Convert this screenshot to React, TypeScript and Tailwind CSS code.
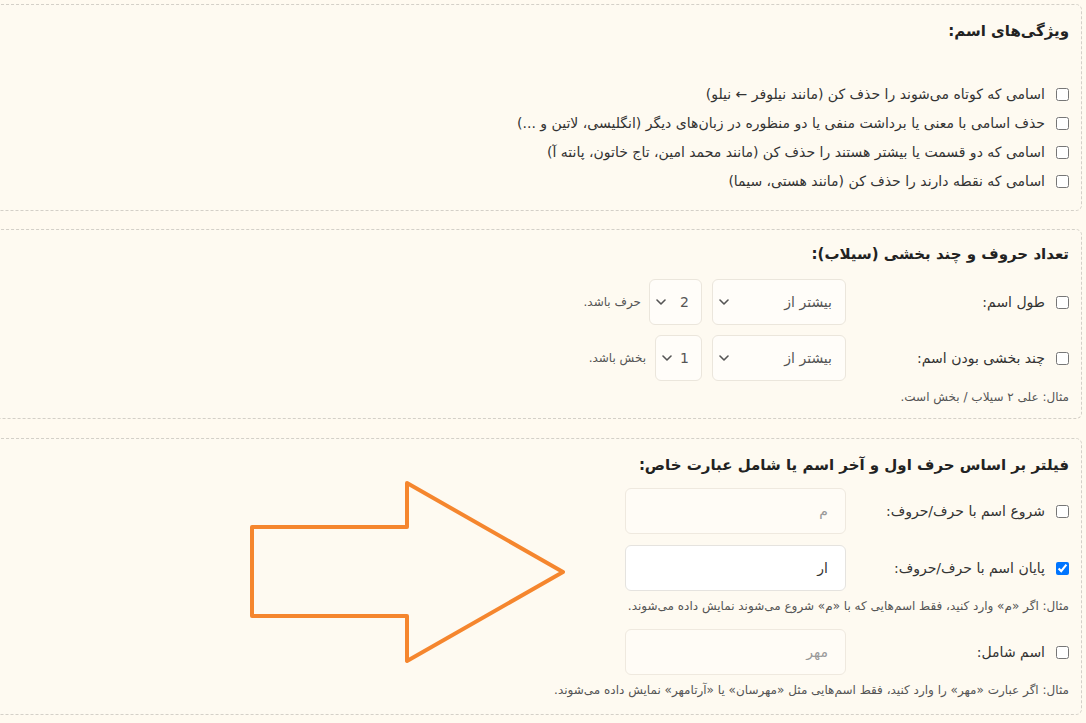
import React from "react";

const font = { fontFamily: '"DejaVu Sans", "Noto Sans", sans-serif' };

function Chevron() {
  return (
    <svg width="10" height="6" viewBox="0 0 10 6" className="block">
      <path d="M1 1 L5 5 L9 1" fill="none" stroke="#555" strokeWidth="1.6" strokeLinecap="round" strokeLinejoin="round" />
    </svg>
  );
}

function Select({ value, w, pr }: { value: string; w: string; pr: string }) {
  return (
    <div className={`relative h-[46px] ${w}`}>
      <select
        defaultValue={value}
        className={`h-full w-full appearance-none rounded-md border border-[#ebe6dc] bg-[#fffdf9] ${pr} pl-6 text-[14px] text-[#555] outline-none`}
        style={font}
      >
        <option>{value}</option>
      </select>
      <span className="pointer-events-none absolute left-[7px] top-1/2 -translate-y-1/2">
        <Chevron />
      </span>
    </div>
  );
}

function Check({ checked = false }: { checked?: boolean }) {
  return <input type="checkbox" defaultChecked={checked} className="m-0 h-[13px] w-[13px] shrink-0" />;
}

export default function App() {
  return (
    <div dir="rtl" className="relative min-h-screen w-full overflow-hidden bg-[#fffaf0] text-[#333]" style={font}>
      <div className="-ml-[60px] mr-[4px] flex flex-col pt-[4px]">
        {/* Panel 1 */}
        <div className="rounded-md border border-dashed border-[#d4d0c8] bg-[#fefaf1] pl-3 pr-[12px] pb-[14px] pt-[13px]">
          <h3 className="text-[15px] font-bold leading-[26px] text-[#222]">ویژگی‌های اسم:</h3>
          <div className="mt-[36px] flex flex-col">
            {[
              "اسامی که کوتاه می‌شوند را حذف کن (مانند نیلوفر ← نیلو)",
              "حذف اسامی با معنی یا برداشت منفی یا دو منظوره در زبان‌های دیگر (انگلیسی، لاتین و ...)",
              "اسامی که دو قسمت یا بیشتر هستند را حذف کن (مانند محمد امین، تاج خاتون، پانته آ)",
              "اسامی که نقطه دارند را حذف کن (مانند هستی، سیما)",
            ].map((t) => (
              <label key={t} className="flex h-[29px] items-center gap-[11px] text-[14px]">
                <Check />
                <span>{t}</span>
              </label>
            ))}
          </div>
        </div>

        {/* Panel 2 */}
        <div className="mt-[18px] rounded-md border border-dashed border-[#d4d0c8] bg-[#fefaf1] pl-3 pr-[12px] pb-[12px] pt-[11px]">
          <h3 className="text-[15px] font-bold leading-[26px] text-[#222]">تعداد حروف و چند بخشی (سیلاب):</h3>
          <div className="mt-[12px] flex items-center">
            <label className="flex w-[210px] items-center gap-[11px] text-[14px]">
              <Check />
              <span>طول اسم:</span>
            </label>
            <div className="mr-[13px]">
              <Select value="بیشتر از" w="w-[134px]" pr="pr-[13px]" />
            </div>
            <div className="mr-[10px]">
              <Select value="2" w="w-[53px]" pr="pr-[12px]" />
            </div>
            <span className="mr-[8px] text-[12px] text-[#555]">حرف باشد.</span>
          </div>
          <div className="mt-[10px] flex items-center">
            <label className="flex w-[210px] items-center gap-[11px] text-[14px]">
              <Check />
              <span>چند بخشی بودن اسم:</span>
            </label>
            <div className="mr-[13px]">
              <Select value="بیشتر از" w="w-[134px]" pr="pr-[13px]" />
            </div>
            <div className="mr-[10px]">
              <Select value="1" w="w-[47px]" pr="pr-[12px]" />
            </div>
            <span className="mr-[9px] text-[12px] text-[#555]">بخش باشد.</span>
          </div>
          <p className="mt-[7px] text-[12px] leading-[18px] text-[#555]">مثال: علی ۲ سیلاب / بخش است.</p>
        </div>

        {/* Panel 3 */}
        <div className="mt-[19px] mb-[6px] rounded-md border border-dashed border-[#d4d0c8] bg-[#fefaf1] pl-3 pr-[12px] pb-[15px] pt-[13px]">
          <h3 className="text-[15px] font-bold leading-[26px] text-[#222]">فیلتر بر اساس حرف اول و آخر اسم یا شامل عبارت خاص:</h3>
          <div className="mt-[10px] flex items-center">
            <label className="flex w-[210px] items-center gap-[11px] text-[14px]">
              <Check />
              <span>شروع اسم با حرف/حروف:</span>
            </label>
            <input
              placeholder="م"
              className="mr-[13px] h-[46px] w-[221px] rounded-md border border-[#efe9df] bg-[#fffcf6] pr-[17px] text-[14px] text-[#333] outline-none placeholder:text-[#999]"
              style={font}
            />
          </div>
          <div className="mt-[11px] flex items-center">
            <label className="flex w-[210px] items-center gap-[11px] text-[14px]">
              <Check checked />
              <span>پایان اسم با حرف/حروف:</span>
            </label>
            <input
              defaultValue="ار"
              className="mr-[13px] h-[46px] w-[221px] rounded-md border border-[#e5e3df] bg-white pr-[17px] text-[14px] text-[#333] outline-none"
              style={font}
            />
          </div>
          <p className="mt-[6px] text-[12px] leading-[18px] text-[#555]">
            مثال: اگر «م» وارد کنید، فقط اسم‌هایی که با «م» شروع می‌شوند نمایش داده می‌شوند.
          </p>
          <div className="mt-[14px] flex items-center">
            <label className="flex w-[210px] items-center gap-[11px] text-[14px]">
              <Check />
              <span>اسم شامل:</span>
            </label>
            <input
              placeholder="مهر"
              className="mr-[13px] h-[46px] w-[221px] rounded-md border border-[#efe9df] bg-[#fffcf6] pr-[17px] text-[14px] text-[#333] outline-none placeholder:text-[#999]"
              style={font}
            />
          </div>
          <p className="mt-[6px] text-[12px] leading-[18px] text-[#555]">
            مثال: اگر عبارت «مهر» را وارد کنید، فقط اسم‌هایی مثل «مهرسان» یا «آرتامهر» نمایش داده می‌شوند.
          </p>
        </div>
      </div>

      <svg
        className="pointer-events-none absolute left-0 top-0"
        width="1086"
        height="723"
        viewBox="0 0 1086 723"
      >
        <polygon
          points="252,527 407,527 407,483 563,572 407,661 407,616 252,616"
          fill="none"
          stroke="#f5862e"
          strokeWidth="4"
          strokeLinejoin="round"
        />
      </svg>
    </div>
  );
}
